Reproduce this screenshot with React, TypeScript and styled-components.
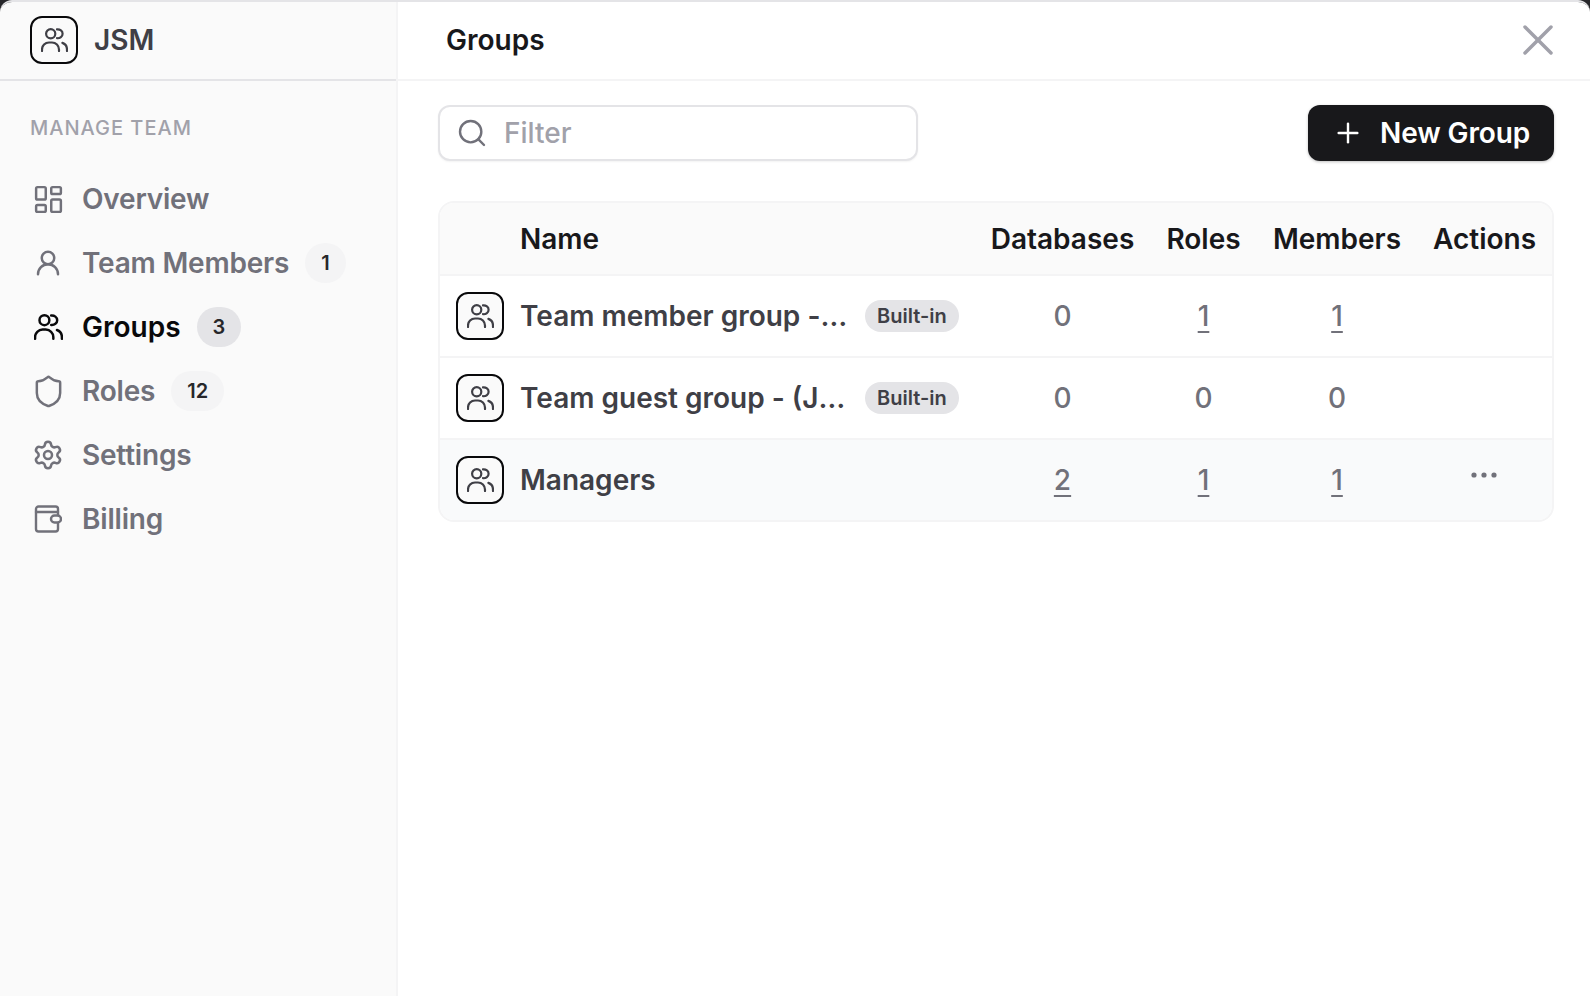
import React from 'react';
import styled, { createGlobalStyle } from 'styled-components';
import { LayoutDashboard, Plus, Search, Settings, Shield, UserRound, X } from 'lucide-react';

const GlobalStyle = createGlobalStyle`
  html, body {
    margin: 0;
    padding: 0;
    background: #27272a;
    font-family: Inter, "Liberation Sans", sans-serif;
    color: #18181b;
  }
  * {
    box-sizing: border-box;
  }
`;

const Shell = styled.div`
  display: flex;
  width: 1590px;
  height: 996px;
  overflow: hidden;
  border-top: 2px solid #e4e4e7;
  border-radius: 12px 12px 0 0;
`;

const Sidebar = styled.aside`
  width: 398px;
  flex: none;
  background: #fafafa;
  border-right: 2px solid #f4f4f5;
`;

const TeamHeader = styled.div`
  display: flex;
  align-items: center;
  gap: 16px;
  height: 79px;
  padding: 0 0 2px 30px;
  border-bottom: 2px solid #e4e4e7;
`;

const IconBox = styled.div`
  width: 48px;
  height: 48px;
  flex: none;
  display: flex;
  align-items: center;
  justify-content: center;
  background: #fafafa;
  border: 2px solid #09090b;
  border-radius: 12px;
  color: #3f3f46;
`;

const TeamName = styled.div`
  font-size: 28px;
  font-weight: 600;
  color: #3f3f46;
`;

const NavLabel = styled.div`
  margin: 35px 0 27px 30px;
  font-size: 20px;
  font-weight: 500;
  line-height: 24px;
  letter-spacing: 1px;
  color: #a1a1aa;
`;

const NavList = styled.nav`
  display: flex;
  flex-direction: column;
  padding-left: 30px;
`;

const NavItem = styled.div<{ $active?: boolean }>`
  display: flex;
  align-items: center;
  height: 64px;
  font-size: 28px;
  font-weight: 600;
  letter-spacing: ${({ $active }) => ($active ? '0' : '-0.2px')};
  color: ${({ $active }) => ($active ? '#09090b' : '#71717a')};
`;

const NavIcon = styled.span`
  display: flex;
  justify-content: center;
  width: 36px;
  margin-right: 16px;
`;

const Count = styled.span<{ $active?: boolean }>`
  display: flex;
  align-items: center;
  justify-content: center;
  min-width: 40px;
  height: 40px;
  margin-left: 16px;
  padding: 0 16px;
  border-radius: 20px;
  font-size: 20px;
  font-weight: 600;
  letter-spacing: 0;
  color: #27272a;
  background: ${({ $active }) => ($active ? '#e4e4e7' : '#f4f4f5')};
`;

const Main = styled.main`
  flex: 1;
  min-width: 0;
  background: #ffffff;
`;

const TopBar = styled.header`
  display: flex;
  align-items: center;
  justify-content: space-between;
  height: 79px;
  padding: 0 26px 2px 48px;
  border-bottom: 2px solid #f4f4f5;
`;

const Title = styled.h1`
  margin: 0;
  font-size: 28px;
  font-weight: 600;
  color: #18181b;
`;

const Content = styled.div`
  padding: 24px 36px 0 40px;
`;

const Toolbar = styled.div`
  display: flex;
  align-items: center;
  justify-content: space-between;
  margin-bottom: 40px;
`;

const Filter = styled.label`
  display: flex;
  align-items: center;
  gap: 16px;
  width: 480px;
  height: 56px;
  padding: 0 16px;
  background: #ffffff;
  border: 2px solid #e4e4e7;
  border-radius: 12px;
  box-shadow: 0 1px 2px rgba(0, 0, 0, 0.05);
  color: #71717a;
`;

const FilterInput = styled.input`
  flex: 1;
  min-width: 0;
  border: 0;
  outline: 0;
  padding: 0;
  background: transparent;
  font-family: inherit;
  font-size: 28px;
  font-weight: 500;
  color: #18181b;

  &::placeholder {
    color: #a1a1aa;
  }
`;

const NewButton = styled.button`
  display: flex;
  align-items: center;
  gap: 16px;
  width: 246px;
  height: 56px;
  padding: 0 0 0 24px;
  border: 0;
  border-radius: 12px;
  background: #18181b;
  box-shadow: 0 1px 3px rgba(0, 0, 0, 0.25);
  font-family: inherit;
  font-size: 28px;
  font-weight: 600;
  letter-spacing: -0.1px;
  white-space: nowrap;
  color: #ffffff;
`;

const Table = styled.div`
  border: 2px solid #f4f4f5;
  border-radius: 16px;
  overflow: hidden;
`;

const Row = styled.div<{ $tone?: 'head' | 'hover' }>`
  display: grid;
  grid-template-columns: 80px 1fr 175px 107px 160px 135px;
  align-items: center;
  height: ${({ $tone }) => ($tone === 'head' ? '71px' : '80px')};
  background: ${({ $tone }) =>
    $tone === 'head' ? '#fafafa' : $tone === 'hover' ? '#f9fafb' : '#ffffff'};

  & + & {
    border-top: 2px solid #f4f4f5;
    height: 82px;
  }
`;

const IconCell = styled.div`
  display: flex;
  justify-content: center;
`;

const HeadName = styled.div`
  font-size: 28px;
  font-weight: 600;
  color: #18181b;
`;

const HeadCell = styled(HeadName)`
  text-align: center;
`;

const NameCell = styled.div`
  display: flex;
  align-items: center;
  min-width: 0;
  padding-right: 16px;
`;

const GroupName = styled.span<{ $clipped?: boolean }>`
  width: ${({ $clipped }) => ($clipped ? '329px' : 'auto')};
  overflow: hidden;
  white-space: nowrap;
  text-overflow: ellipsis;
  font-size: 28px;
  font-weight: 600;
  color: #3f3f46;
`;

const Tag = styled.span`
  height: 32px;
  margin-left: 16px;
  padding: 0 12px;
  flex: none;
  border-radius: 16px;
  background: #e4e4e7;
  font-size: 20px;
  font-weight: 600;
  line-height: 32px;
  color: #3f3f46;
`;

const CountCell = styled.div<{ $link?: boolean }>`
  text-align: center;
  font-size: 28px;
  font-weight: 500;
  color: #71717a;
  text-decoration: ${({ $link }) => ($link ? 'underline' : 'none')};
  text-underline-offset: 5px;
  text-decoration-thickness: 2px;
`;

const ActionsCell = styled.div`
  display: flex;
  justify-content: center;
  margin-top: -10px;
  padding-right: 2px;
  color: #71717a;
`;

const GroupIcon: React.FC<{ size?: number; weight?: number }> = ({ size = 27, weight = 2.2 }) => (
  <svg width={size} height={(size * 24) / 27} viewBox="0 0 27 24" fill="none" stroke="currentColor" strokeWidth={weight} strokeLinecap="round" strokeLinejoin="round">
    <circle cx="9.700" cy="5.800" r="4.600" />
    <path d="M16 1.400c3-.3 5.600 1.600 5.600 4.400s-2.600 4.700-5.600 4.400" />
    <path d="M1 23v-1.500a7 7 0 0 1 7-7h3a7 7 0 0 1 7 7V23" />
    <path d="M26 23v-1.500a7 7 0 0 0-4.600-6.600" />
  </svg>
);

const WalletIcon = () => (
  <svg width="28" height="28" viewBox="0 0 28 28" fill="none" stroke="#71717a" strokeWidth="2.4" strokeLinecap="round" strokeLinejoin="round">
    <path d="M24 10V4a2.500 2.500 0 0 0-2.500-2.500h-17A2.500 2.500 0 0 0 2 4v20a2.500 2.500 0 0 0 2.500 2.500h17A2.500 2.500 0 0 0 24 24v-6" />
    <path d="M2 7h22" />
    <rect x="17" y="10.500" width="10" height="7" rx="3.500" />
  </svg>
);

const DotsIcon = () => (
  <svg width="28" height="8" viewBox="0 0 28 8" fill="currentColor">
    <circle cx="4" cy="4" r="2.600" />
    <circle cx="14" cy="4" r="2.600" />
    <circle cx="24" cy="4" r="2.600" />
  </svg>
);

const muted = '#71717a';

const navItems = [
  { label: 'Overview', icon: <LayoutDashboard size={33} strokeWidth={1.800} color={muted} /> },
  { label: 'Team Members', icon: <UserRound size={30} strokeWidth={2} color={muted} />, count: '1' },
  { label: 'Groups', icon: <GroupIcon size={29} weight={2.300} />, count: '3', active: true },
  { label: 'Roles', icon: <Shield size={35} strokeWidth={1.700} color={muted} />, count: '12' },
  { label: 'Settings', icon: <Settings size={32} strokeWidth={1.900} color={muted} /> },
  { label: 'Billing', icon: <WalletIcon /> },
];

const groups = [
  { name: 'Team member group - (JSM)', builtIn: true, databases: 0, roles: 1, members: 1 },
  { name: 'Team guest group - (JSM)', builtIn: true, databases: 0, roles: 0, members: 0 },
  { name: 'Managers', builtIn: false, databases: 2, roles: 1, members: 1, hover: true },
];

const App: React.FC = () => {
  return (
    <>
      <GlobalStyle />
      <Shell>
        <Sidebar>
          <TeamHeader>
            <IconBox>
              <GroupIcon />
            </IconBox>
            <TeamName>JSM</TeamName>
          </TeamHeader>
          <NavLabel>MANAGE TEAM</NavLabel>
          <NavList>
            {navItems.map((item) => (
              <NavItem key={item.label} $active={item.active}>
                <NavIcon>{item.icon}</NavIcon>
                {item.label}
                {item.count && <Count $active={item.active}>{item.count}</Count>}
              </NavItem>
            ))}
          </NavList>
        </Sidebar>
        <Main>
          <TopBar>
            <Title>Groups</Title>
            <X size={52} strokeWidth={1.600} color="#a1a1aa" />
          </TopBar>
          <Content>
            <Toolbar>
              <Filter>
                <Search size={32} strokeWidth={1.800} />
                <FilterInput placeholder="Filter" />
              </Filter>
              <NewButton>
                <Plus size={32} strokeWidth={1.800} />
                New Group
              </NewButton>
            </Toolbar>
            <Table>
              <Row $tone="head">
                <div />
                <HeadName>Name</HeadName>
                <HeadCell>Databases</HeadCell>
                <HeadCell>Roles</HeadCell>
                <HeadCell>Members</HeadCell>
                <HeadCell>Actions</HeadCell>
              </Row>
              {groups.map((group) => (
                <Row key={group.name} $tone={group.hover ? 'hover' : undefined}>
                  <IconCell>
                    <IconBox>
                      <GroupIcon />
                    </IconBox>
                  </IconCell>
                  <NameCell>
                    <GroupName $clipped={group.builtIn}>{group.name}</GroupName>
                    {group.builtIn && <Tag>Built-in</Tag>}
                  </NameCell>
                  <CountCell $link={group.databases > 0}>{group.databases}</CountCell>
                  <CountCell $link={group.roles > 0}>{group.roles}</CountCell>
                  <CountCell $link={group.members > 0}>{group.members}</CountCell>
                  {group.builtIn ? (
                    <div />
                  ) : (
                    <ActionsCell>
                      <DotsIcon />
                    </ActionsCell>
                  )}
                </Row>
              ))}
            </Table>
          </Content>
        </Main>
      </Shell>
    </>
  );
};

export default App;
